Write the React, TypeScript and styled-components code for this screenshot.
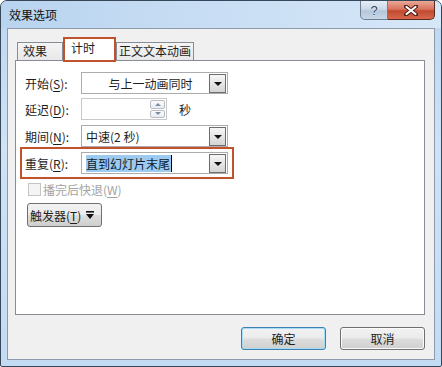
import React from 'react';
import styled, { createGlobalStyle } from 'styled-components';

const GlobalStyle = createGlobalStyle`
  html, body {
    margin: 0;
    padding: 0;
    background: #ffffff;
  }
  body {
    font-family: "Noto Sans CJK SC", "Noto Sans", sans-serif;
    font-size: 12px;
    color: #1e1e1e;
  }
`;

const Window = styled.div`
  box-sizing: border-box;
  width: 442px;
  height: 367px;
  border: 1px solid #36475a;
  border-radius: 7px 7px 2px 2px;
  background: linear-gradient(180deg, #bcd6f0 0%, #cfe2f6 40%, #c3dbf3 100%);
  display: flex;
  flex-direction: column;
  overflow: hidden;
`;

const TitleBar = styled.div`
  height: 27px;
  display: flex;
  align-items: flex-start;
  justify-content: space-between;
  background: linear-gradient(90deg, #b9d4ef 0%, #c9def4 50%, #d6e7f8 100%);
`;

const Title = styled.span`
  padding: 5px 0 0 8px;
  line-height: 17px;
  color: #111;
`;

const Caption = styled.div`
  display: flex;
  margin-right: 6px;
`;

const CaptionButton = styled.div<{ $close?: boolean }>`
  box-sizing: border-box;
  height: 19px;
  width: ${({ $close }) => ($close ? '47px' : '28px')};
  border: 1px solid ${({ $close }) => ($close ? '#5a2a20' : '#6e7f93')};
  border-top: none;
  border-left: ${({ $close }) => ($close ? 'none' : '1px solid #6e7f93')};
  border-radius: ${({ $close }) => ($close ? '0 0 5px 0' : '0 0 0 5px')};
  background: ${({ $close }) =>
    $close
      ? 'linear-gradient(180deg, #e9a89a 0%, #d9735d 45%, #c24a30 55%, #d6674d 100%)'
      : 'linear-gradient(180deg, #e4edf7 0%, #cbd9e8 45%, #b4c6da 55%, #c9d7e6 100%)'};
  display: flex;
  align-items: center;
  justify-content: center;
`;

const Client = styled.div`
  box-sizing: border-box;
  margin: 0 6px 6px;
  height: 332px;
  border: 1px solid #8c9aab;
  background: #f0f0f0;
  padding: 8px 9px 9px 7px;
  display: flex;
  flex-direction: column;
`;

const TabStrip = styled.div`
  height: 23px;
  display: flex;
  align-items: flex-end;
  padding-left: 2px;
`;

const Tab = styled.div<{ $w: number; $pl: number }>`
  box-sizing: border-box;
  width: ${({ $w }) => $w}px;
  height: 18px;
  padding-left: ${({ $pl }) => $pl}px;
  border: 1px solid #898c95;
  border-bottom: none;
  background: linear-gradient(180deg, #f4f4f4 0%, #e8e8e8 100%);
  line-height: 16px;
  white-space: nowrap;
`;

const ActiveTab = styled.div`
  box-sizing: border-box;
  position: relative;
  z-index: 1;
  width: 53px;
  height: 25px;
  margin-bottom: -2px;
  padding: 1px 0 0 6px;
  border: 2px solid #c0532e;
  background: #ffffff;
  line-height: 16px;
`;

const Panel = styled.div`
  box-sizing: border-box;
  height: 255px;
  border: 1px solid #898c95;
  background: #ffffff;
  padding: 11px 0 0 9px;
  display: flex;
  flex-direction: column;
  align-items: flex-start;
`;

const Row = styled.div<{ $mt: number }>`
  display: flex;
  align-items: center;
  height: 22px;
  margin-top: ${({ $mt }) => $mt}px;
`;

const MarkedRow = styled(Row)`
  margin: 0 0 -5px -5px;
  margin-top: ${({ $mt }) => $mt - 5}px;
  padding: 3px 4px 3px 3px;
  border: 2px solid #c0532e;
`;

const Label = styled.span`
  width: 56px;
  white-space: nowrap;
`;

const Key = styled.u`
  text-underline-offset: 2px;
`;

const Combo = styled.div<{ $center?: boolean }>`
  box-sizing: border-box;
  width: 147px;
  height: 22px;
  border: 1px solid #acacac;
  background: #fff;
  display: flex;
  align-items: center;
  padding: 0 1px 0 4px;
  justify-content: ${({ $center }) => ($center ? 'center' : 'flex-start')};
  position: relative;
`;

const ComboText = styled.span<{ $center?: boolean }>`
  flex: 1;
  text-align: ${({ $center }) => ($center ? 'center' : 'left')};
  padding-left: ${({ $center }) => ($center ? '6px' : '0')};
  white-space: nowrap;
`;

const Selected = styled.span`
  background: #9ccaf1;
  color: #0d1b2a;
  line-height: 16px;
  padding-right: 1px;
  border-right: 1px solid #000;
`;

const DropButton = styled.div`
  box-sizing: border-box;
  width: 17px;
  height: 19px;
  flex: none;
  border: 1px solid #6d6d6d;
  background: linear-gradient(180deg, #f6f6f6 0%, #e6e6e6 50%, #d4d4d4 100%);
  display: flex;
  align-items: center;
  justify-content: center;
`;

const Arrow = styled.span`
  width: 0;
  height: 0;
  border-left: 4px solid transparent;
  border-right: 4px solid transparent;
  border-top: 4px solid #111;
  margin-top: 1px;
`;

const SpinInput = styled.div`
  box-sizing: border-box;
  width: 86px;
  height: 22px;
  border: 1px solid #c9c9c9;
  background: #fff;
  display: flex;
  justify-content: flex-end;
  padding: 1px 1px 1px 0;
`;

const Spinner = styled.div`
  display: flex;
  flex-direction: column;
  gap: 1px;
`;

const SpinButton = styled.div<{ $down?: boolean }>`
  box-sizing: border-box;
  width: 15px;
  height: 9px;
  border: 1px solid #b8bcc4;
  border-radius: 2px;
  background: linear-gradient(180deg, #fbfbfb 0%, #e9ecf0 100%);
  display: flex;
  align-items: center;
  justify-content: center;

  &::after {
    content: '';
    width: 0;
    height: 0;
    border-left: 3px solid transparent;
    border-right: 3px solid transparent;
    ${({ $down }) => ($down ? 'border-top: 3px solid #7d8ca3;' : 'border-bottom: 3px solid #7d8ca3;')}
  }
`;

const Unit = styled.span`
  margin-left: 12px;
`;

const CheckRow = styled.label`
  display: flex;
  align-items: center;
  margin: 8px 0 0 3px;
  height: 14px;
  color: #a3a3a3;
`;

const Check = styled.span`
  box-sizing: border-box;
  width: 13px;
  height: 13px;
  border: 1px solid #c4c4c4;
  background: #f4f4f4;
  margin-right: 2px;
`;

const Trigger = styled.div`
  box-sizing: border-box;
  width: 75px;
  height: 24px;
  margin: 7px 0 0 2px;
  border: 1px solid #707070;
  border-radius: 3px;
  background: linear-gradient(180deg, #f2f2f2 0%, #ebebeb 49%, #dddddd 51%, #cfcfcf 100%);
  display: flex;
  align-items: center;
  padding-left: 2px;
  gap: 5px;
  white-space: nowrap;
`;

const Footer = styled.div`
  margin-top: 12px;
  display: flex;
  justify-content: flex-end;
  gap: 14px;
`;

const DialogButton = styled.div<{ $default?: boolean }>`
  box-sizing: border-box;
  width: 85px;
  height: 23px;
  border: 1px solid ${({ $default }) => ($default ? '#3c7fb1' : '#707070')};
  border-radius: 3px;
  box-shadow: ${({ $default }) => ($default ? 'inset 0 0 0 1px #a6dcf6' : 'inset 0 0 0 1px #fbfbfb')};
  background: linear-gradient(180deg, #f2f2f2 0%, #ebebeb 49%, #dddddd 51%, #cfcfcf 100%);
  display: flex;
  align-items: center;
  justify-content: center;
  line-height: 16px;
`;

const HelpIcon = () => (
  <svg width="12" height="14" viewBox="0 0 12 14">
    <text x="6" y="12" textAnchor="middle" fontSize="13" fontFamily="Liberation Sans, sans-serif"
      fill="#2d3b4d" stroke="#ffffff" strokeWidth="0.6" paintOrder="stroke">?</text>
  </svg>
);

const CloseIcon = () => (
  <svg width="14" height="11" viewBox="0 0 14 11">
    <path d="M2 1.5 L12 9.5 M12 1.5 L2 9.5" stroke="#4a1d14" strokeWidth="4" strokeLinecap="round" />
    <path d="M2.5 2 L11.5 9 M11.5 2 L2.5 9" stroke="#ffffff" strokeWidth="2.2" strokeLinecap="round" />
  </svg>
);

const SplitArrow = () => (
  <svg width="8" height="9" viewBox="0 0 8 9">
    <rect x="0" y="0" width="8" height="1.6" fill="#111" />
    <path d="M0 3 H8 L4 8 Z" fill="#111" />
  </svg>
);

export default function App() {
  return (
    <>
      <GlobalStyle />
      <Window>
        <TitleBar>
          <Title>效果选项</Title>
          <Caption>
            <CaptionButton><HelpIcon /></CaptionButton>
            <CaptionButton $close><CloseIcon /></CaptionButton>
          </Caption>
        </TitleBar>
        <Client>
          <TabStrip>
            <Tab $w={46} $pl={5}>效果</Tab>
            <ActiveTab>计时</ActiveTab>
            <Tab $w={78} $pl={2}>正文文本动画</Tab>
          </TabStrip>
          <Panel>
            <Row $mt={0}>
              <Label>开始(<Key>S</Key>):</Label>
              <Combo $center>
                <ComboText $center>与上一动画同时</ComboText>
                <DropButton><Arrow /></DropButton>
              </Combo>
            </Row>
            <Row $mt={4}>
              <Label>延迟(<Key>D</Key>):</Label>
              <SpinInput>
                <Spinner>
                  <SpinButton />
                  <SpinButton $down />
                </Spinner>
              </SpinInput>
              <Unit>秒</Unit>
            </Row>
            <Row $mt={5}>
              <Label>期间(<Key>N</Key>):</Label>
              <Combo>
                <ComboText>中速(2 秒)</ComboText>
                <DropButton><Arrow /></DropButton>
              </Combo>
            </Row>
            <MarkedRow $mt={5}>
              <Label>重复(<Key>R</Key>):</Label>
              <Combo>
                <ComboText><Selected>直到幻灯片末尾</Selected></ComboText>
                <DropButton><Arrow /></DropButton>
              </Combo>
            </MarkedRow>
            <CheckRow>
              <Check />
              播完后快退(<Key>W</Key>)
            </CheckRow>
            <Trigger>
              <span>触发器(<Key>T</Key>)</span>
              <SplitArrow />
            </Trigger>
          </Panel>
          <Footer>
            <DialogButton $default>确定</DialogButton>
            <DialogButton>取消</DialogButton>
          </Footer>
        </Client>
      </Window>
    </>
  );
}
